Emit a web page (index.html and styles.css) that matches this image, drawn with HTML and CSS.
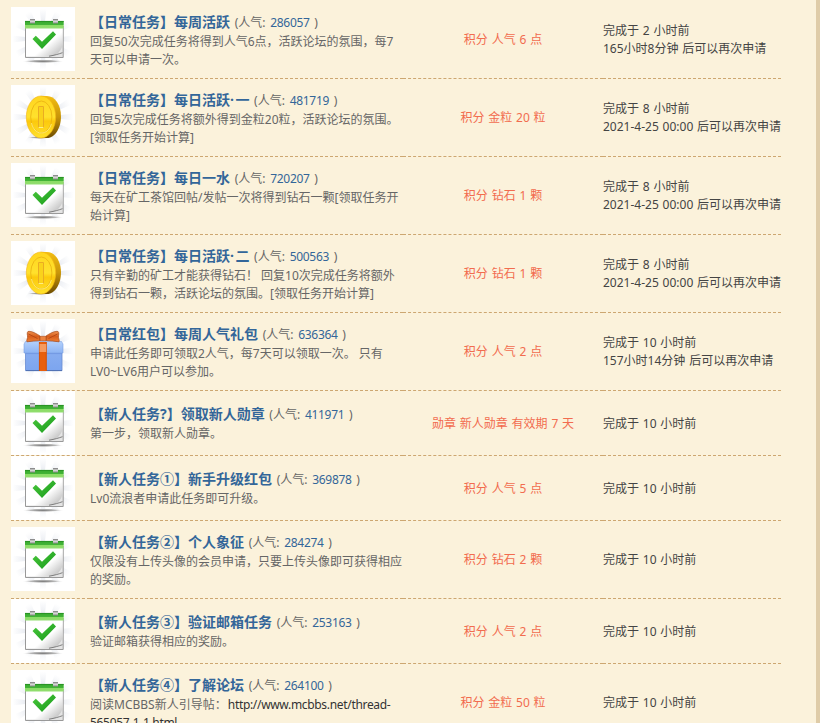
FILE: index.html
```html
<!DOCTYPE html>
<html lang="zh-CN">
<head>
<meta charset="utf-8">
<title>论坛任务</title>
<link rel="stylesheet" href="styles.css">
</head>
<body>
<svg class="defs" width="0" height="0" aria-hidden="true">
  <defs>
    <linearGradient id="green" x1="0" y1="0" x2="0" y2="1"><stop offset="0" stop-color="#36a82d"/><stop offset=".55" stop-color="#44b538"/><stop offset=".6" stop-color="#8bdc66"/><stop offset="1" stop-color="#92de70"/></linearGradient>
    <linearGradient id="tick" x1="0" y1="0" x2="1" y2="1"><stop offset="0" stop-color="#4cc83c"/><stop offset="1" stop-color="#169a1b"/></linearGradient>
    <linearGradient id="paper" x1="0" y1="0" x2="1" y2="1"><stop offset=".6" stop-color="#fff"/><stop offset=".9" stop-color="#c4c4c4"/></linearGradient>
    <linearGradient id="metal" x1="0" y1="0" x2="0" y2="1"><stop offset="0" stop-color="#777"/><stop offset=".5" stop-color="#ddd"/><stop offset="1" stop-color="#888"/></linearGradient>
    <linearGradient id="edge" x1="0" y1="0" x2="0" y2="1"><stop offset="0" stop-color="#f3bd12"/><stop offset=".5" stop-color="#c8950a"/><stop offset="1" stop-color="#6d4c00"/></linearGradient>
    <linearGradient id="gold" x1="0" y1="0" x2="0" y2="1"><stop offset="0" stop-color="#ffd51f"/><stop offset=".5" stop-color="#ffe12d"/><stop offset=".6" stop-color="#fcc90c"/><stop offset="1" stop-color="#ffe22c"/></linearGradient>
    <linearGradient id="box" x1="0" y1="0" x2="0" y2="1"><stop offset="0" stop-color="#88adf0"/><stop offset="1" stop-color="#7ca5ef"/></linearGradient>
    <linearGradient id="lid" x1="0" y1="0" x2="0" y2="1"><stop offset="0" stop-color="#b3d0fb"/><stop offset="1" stop-color="#8cb3f4"/></linearGradient>
    <linearGradient id="bow" x1="0" y1="0" x2="0" y2="1"><stop offset="0" stop-color="#ee9350"/><stop offset=".5" stop-color="#d85d1b"/><stop offset="1" stop-color="#ed8136"/></linearGradient>
    <radialGradient id="fade" gradientUnits="userSpaceOnUse" cx="32" cy="32" r="32"><stop offset=".5" stop-color="#e8ebf1"/><stop offset=".95" stop-color="#fff"/></radialGradient>
    <radialGradient id="shade"><stop offset="0" stop-color="#777"/><stop offset=".6" stop-color="#bbb"/><stop offset="1" stop-color="#fff" stop-opacity="0"/></radialGradient>
    <g id="rays" fill="url(#fade)">
      <path id="ray" d="M32 32 28.500 1h7zM32 32 28.500 63h7z"/>
      <use href="#ray" transform="rotate(30 32 32)"/>
      <use href="#ray" transform="rotate(60 32 32)"/>
      <use href="#ray" transform="rotate(90 32 32)"/>
      <use href="#ray" transform="rotate(120 32 32)"/>
      <use href="#ray" transform="rotate(150 32 32)"/>
    </g>
    <symbol id="calendar" viewBox="0 0 64 64">
      <use href="#rays"/>
      <ellipse cx="32" cy="54.300" rx="21" ry="1.800" fill="url(#shade)"/>
      <path d="M14.500 19h37.700v31.500H14.500z" fill="#e4e4e4" stroke="#999"/>
      <path d="M15 18h36.700v19.500c-1 5-3.500 7.500-5.500 9-3 2.500-6 2.700-9 3H15z" fill="url(#paper)"/>
      <path d="M38 49.200c6-1 9-2 13.500-3.500" fill="none" stroke="#666" stroke-width=".8"/>
      <path d="M14 14h38.700v7.500H14z" fill="url(#green)"/>
      <path d="M14 14.400h38.700" stroke="#258b22" stroke-width=".8"/>
      <path d="M19 12h5v4.500h-5zM42 12h5v4.500h-5z" fill="url(#metal)"/>
      <path d="m21.500 32 3.300-3.200 6.200 6 11-10.500 3 3.200L31 42z" fill="url(#tick)"/>
    </symbol>
    <symbol id="coin" viewBox="0 0 64 64">
      <use href="#rays"/>
      <ellipse cx="29" cy="52.500" rx="13" ry="1.500" fill="url(#shade)"/>
      <path d="M30 11h6c8 0 14 9 14 20.500S44 53 36 53h-6z" fill="url(#edge)"/>
      <ellipse cx="30" cy="32" rx="14.700" ry="21" fill="url(#gold)" stroke="#f3b312" stroke-width=".6"/>
      <ellipse cx="30.300" cy="32" rx="10.600" ry="16" fill="none" stroke="#e9b010" stroke-width=".8"/>
      <path d="M20.500 38c1.500 6 5 10 9.800 10s8.600-3.700 10-9" fill="none" stroke="#fff18a" stroke-width=".8"/>
      <path d="M27.500 21.500h5v21h-5z" fill="#fad21b" stroke="#fff083"/>
      <path d="M27.500 42.500v-21h5v21" fill="none" stroke="#e59a08" stroke-width=".8"/>
    </symbol>
    <symbol id="gift" viewBox="0 0 64 64">
      <use href="#rays"/>
      <path d="M14.500 33h36.500v18.700H14.500z" fill="url(#box)" stroke="#688bd0" stroke-width=".8"/>
      <path d="M15 51.500h36" stroke="#5273b5"/>
      <path d="M14.500 22.500h36L52 25v9H13v-9z" fill="url(#lid)" stroke="#7ea3e3" stroke-width=".6"/>
      <path d="M15 34.600h36" stroke="#6e96df" stroke-width=".8"/>
      <path d="M28 23h7.700v29H28z" fill="#e85f0d"/>
      <path d="M28.400 23v29M35.300 23v29" stroke="#c94e0c" stroke-width=".7"/>
      <path d="M28.500 25h6.700v8h-6.700z" fill="#f59a5f"/>
      <path d="M29 17c-3-2-7-4.500-11-4.700-2 0-2 2-1.500 4.500.5 2-1.500 5-.5 6 4-.6 9-1 13-1.300zM35 17c3-2 7-4.500 11-4.700 2 0 2 2 1.500 4.500-.5 2 1.500 5 .5 6-4-.6-9-1-13-1.300z" fill="url(#bow)" stroke="#a94a1a" stroke-width=".7"/>
      <path d="m17.500 15 9 4.500M46.500 15l-9 4.500" stroke="#b84a16"/>
      <path d="M29 17.300h6v4.400h-6z" fill="#ed8340" stroke="#a94a1a" stroke-width=".6"/>
    </symbol>
  </defs>
</svg>
<main class="panel">
<table class="tasks">
  <colgroup><col class="c-icon"><col class="c-info"><col class="c-reward"><col class="c-state"></colgroup>
  <tbody>
  <tr class="tall"><td class="icon"><svg><use href="#calendar"/></svg></td><td class="info"><h3><a>【日常任务】每周活跃</a> <span>(人气: <b>286057</b> )</span></h3><p>回复50次完成任务将得到人气6点，活跃论坛的氛围，每7<br>天可以申请一次。</p></td><td class="reward">积分 人气 6 点</td><td class="state">完成于 2 小时前<br>165小时8分钟 后可以再次申请</td></tr>
  <tr class="tall"><td class="icon"><svg><use href="#coin"/></svg></td><td class="info"><h3><a>【日常任务】每日活跃<i>·</i>一</a> <span>(人气: <b>481719</b> )</span></h3><p>回复5次完成任务将额外得到金粒20粒，活跃论坛的氛围。<br>[领取任务开始计算]</p></td><td class="reward">积分 金粒 20 粒</td><td class="state">完成于 8 小时前<br>2021-4-25 00:00 后可以再次申请</td></tr>
  <tr class="tall"><td class="icon"><svg><use href="#calendar"/></svg></td><td class="info"><h3><a>【日常任务】每日一水</a> <span>(人气: <b>720207</b> )</span></h3><p>每天在矿工茶馆回帖/发帖一次将得到钻石一颗[领取任务开<br>始计算]</p></td><td class="reward">积分 钻石 1 颗</td><td class="state">完成于 8 小时前<br>2021-4-25 00:00 后可以再次申请</td></tr>
  <tr class="tall"><td class="icon"><svg><use href="#coin"/></svg></td><td class="info"><h3><a>【日常任务】每日活跃<i>·</i>二</a> <span>(人气: <b>500563</b> )</span></h3><p>只有辛勤的矿工才能获得钻石！ 回复10次完成任务将额外<br>得到钻石一颗，活跃论坛的氛围。[领取任务开始计算]</p></td><td class="reward">积分 钻石 1 颗</td><td class="state">完成于 8 小时前<br>2021-4-25 00:00 后可以再次申请</td></tr>
  <tr class="tall"><td class="icon"><svg><use href="#gift"/></svg></td><td class="info"><h3><a>【日常红包】每周人气礼包</a> <span>(人气: <b>636364</b> )</span></h3><p>申请此任务即可领取2人气，每7天可以领取一次。 只有<br>LV0~LV6用户可以参加。</p></td><td class="reward">积分 人气 2 点</td><td class="state">完成于 10 小时前<br>157小时14分钟 后可以再次申请</td></tr>
  <tr><td class="icon"><svg><use href="#calendar"/></svg></td><td class="info"><h3><a>【新人任务?】领取新人勋章</a> <span>(人气: <b>411971</b> )</span></h3><p>第一步，领取新人勋章。</p></td><td class="reward">勋章 新人勋章 有效期 7 天</td><td class="state">完成于 10 小时前</td></tr>
  <tr><td class="icon"><svg><use href="#calendar"/></svg></td><td class="info"><h3><a>【新人任务①】新手升级红包</a> <span>(人气: <b>369878</b> )</span></h3><p>Lv0流浪者申请此任务即可升级。</p></td><td class="reward">积分 人气 5 点</td><td class="state">完成于 10 小时前</td></tr>
  <tr class="tall"><td class="icon"><svg><use href="#calendar"/></svg></td><td class="info"><h3><a>【新人任务②】个人象征</a> <span>(人气: <b>284274</b> )</span></h3><p>仅限没有上传头像的会员申请，只要上传头像即可获得相应<br>的奖励。</p></td><td class="reward">积分 钻石 2 颗</td><td class="state">完成于 10 小时前</td></tr>
  <tr><td class="icon"><svg><use href="#calendar"/></svg></td><td class="info"><h3><a>【新人任务③】验证邮箱任务</a> <span>(人气: <b>253163</b> )</span></h3><p>验证邮箱获得相应的奖励。</p></td><td class="reward">积分 人气 2 点</td><td class="state">完成于 10 小时前</td></tr>
  <tr class="tall"><td class="icon"><svg><use href="#calendar"/></svg></td><td class="info"><h3><a>【新人任务④】了解论坛</a> <span>(人气: <b>264100</b> )</span></h3><p>阅读MCBBS新人引导帖： <a class="url">http://www.mcbbs.net/thread-<br>565057-1-1.html</a></p></td><td class="reward">积分 金粒 50 粒</td><td class="state">完成于 10 小时前</td></tr>
  </tbody>
</table>
</main>
</body>
</html>
```
FILE: styles.css
```css
* { box-sizing: border-box; }

body {
  margin: 0;
  height: 723px;
  overflow: hidden;
  background: #fbf2db;
  color: #444;
  font: 12px/18px "Noto Sans", "Noto Sans CJK SC", sans-serif;
  text-spacing-trim: space-all;
}

.defs { display: block; }

.panel {
  height: 723px;
  padding: 1px 0 0 11px;
  overflow: hidden;
  border-right: 4px solid #dfcca8;
}

.tasks {
  width: 770px;
  table-layout: fixed;
  border-collapse: separate;
  border-spacing: 0;
}

.c-icon { width: 79px; }
.c-info { width: 313px; }
.c-reward { width: 200px; }
.c-state { width: 178px; }

td {
  padding: 0;
  vertical-align: middle;
  white-space: nowrap;
  border-bottom: 1px dashed #cda771;
}

.icon svg {
  display: block;
  width: 64px;
  height: 64px;
  background: #fff;
}

.tall .icon {
  padding-top: 6px;
  vertical-align: top;
}

.info {
  height: 65px;
  color: #666;
}

h3 {
  height: 22px;
  margin: 10px 0 0;
  font-size: 14px;
  line-height: 21px;
  color: #369;
}

h3 i {
  font-style: normal;
  letter-spacing: 1.5px;
}

h3 span {
  font-size: 12px;
  font-weight: normal;
  color: #666;
  word-spacing: 1.6px;
}

h3 b {
  font-weight: normal;
  letter-spacing: -0.3px;
  color: #369;
}

h3 a { margin-right: 1px; }

p {
  min-height: 20px;
  margin: 0 0 9px;
}

.url {
  color: #333;
  letter-spacing: -0.32px;
  margin-left: -2px;
}

.reward,
.state {
  padding-top: 2px;
  word-spacing: 0.7px;
}

.tall .reward,
.tall .state { padding-top: 0; }

.reward {
  text-align: center;
  color: #f26c4f;
}
```
